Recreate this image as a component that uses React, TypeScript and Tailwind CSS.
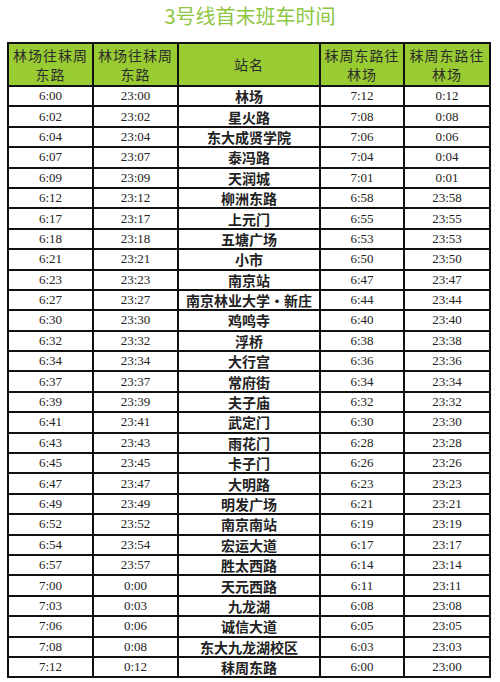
import React from "react";

// 3号线首末班车时间表
const rows: [string, string, string, string, string][] = [
  ["6:00", "23:00", "林场", "7:12", "0:12"],
  ["6:02", "23:02", "星火路", "7:08", "0:08"],
  ["6:04", "23:04", "东大成贤学院", "7:06", "0:06"],
  ["6:07", "23:07", "泰冯路", "7:04", "0:04"],
  ["6:09", "23:09", "天润城", "7:01", "0:01"],
  ["6:12", "23:12", "柳洲东路", "6:58", "23:58"],
  ["6:17", "23:17", "上元门", "6:55", "23:55"],
  ["6:18", "23:18", "五塘广场", "6:53", "23:53"],
  ["6:21", "23:21", "小市", "6:50", "23:50"],
  ["6:23", "23:23", "南京站", "6:47", "23:47"],
  ["6:27", "23:27", "南京林业大学・新庄", "6:44", "23:44"],
  ["6:30", "23:30", "鸡鸣寺", "6:40", "23:40"],
  ["6:32", "23:32", "浮桥", "6:38", "23:38"],
  ["6:34", "23:34", "大行宫", "6:36", "23:36"],
  ["6:37", "23:37", "常府街", "6:34", "23:34"],
  ["6:39", "23:39", "夫子庙", "6:32", "23:32"],
  ["6:41", "23:41", "武定门", "6:30", "23:30"],
  ["6:43", "23:43", "雨花门", "6:28", "23:28"],
  ["6:45", "23:45", "卡子门", "6:26", "23:26"],
  ["6:47", "23:47", "大明路", "6:23", "23:23"],
  ["6:49", "23:49", "明发广场", "6:21", "23:21"],
  ["6:52", "23:52", "南京南站", "6:19", "23:19"],
  ["6:54", "23:54", "宏运大道", "6:17", "23:17"],
  ["6:57", "23:57", "胜太西路", "6:14", "23:14"],
  ["7:00", "0:00", "天元西路", "6:11", "23:11"],
  ["7:03", "0:03", "九龙湖", "6:08", "23:08"],
  ["7:06", "0:06", "诚信大道", "6:05", "23:05"],
  ["7:08", "0:08", "东大九龙湖校区", "6:03", "23:03"],
  ["7:12", "0:12", "秣周东路", "6:00", "23:00"],
];

const headers = ["林场往秣周东路", "林场往秣周东路", "站名", "秣周东路往林场", "秣周东路往林场"];

const timeCell =
  "border-2 border-[#111] text-center p-0 font-['Liberation_Serif',serif] text-[13px] leading-[14px] text-[#222]";
const stationCell =
  "border-2 border-[#111] text-center p-0 font-['Noto_Sans_CJK_SC',sans-serif] text-[14px] font-semibold text-[#222] leading-[14px]";

export default function App() {
  return (
    <div className="w-[500px] h-[682px] bg-white overflow-hidden">
      <h1 className="h-[42px] pt-[2px] text-center text-[20px] leading-[28px] text-[#8dc63f] font-['Noto_Sans_CJK_SC',sans-serif]">
        3号线首末班车时间
      </h1>

      <table className="ml-[7px] w-[482px] table-fixed border-collapse border-2 border-[#111]">
        <colgroup>
          <col className="w-[85px]" />
          <col className="w-[85px]" />
          <col className="w-[142px]" />
          <col className="w-[84px]" />
          <col className="w-[86px]" />
        </colgroup>
        <thead>
          <tr className="h-[43px] bg-[#99cc33]">
            {headers.map((h, i) => (
              <th
                key={i}
                className="border-2 border-[#111] px-[3px] py-0 font-normal text-[14px] leading-[19px] tracking-[1px] text-[#2b2b2b] font-['Noto_Sans_CJK_SC',sans-serif]"
              >
                {h}
              </th>
            ))}
          </tr>
        </thead>
        <tbody>
          {rows.map((r, i) => (
            <tr key={i} className="h-[20.4px]">
              <td className={timeCell}>{r[0]}</td>
              <td className={timeCell}>{r[1]}</td>
              <td className={stationCell}>{r[2]}</td>
              <td className={timeCell}>{r[3]}</td>
              <td className={timeCell}>{r[4]}</td>
            </tr>
          ))}
        </tbody>
      </table>
    </div>
  );
}
